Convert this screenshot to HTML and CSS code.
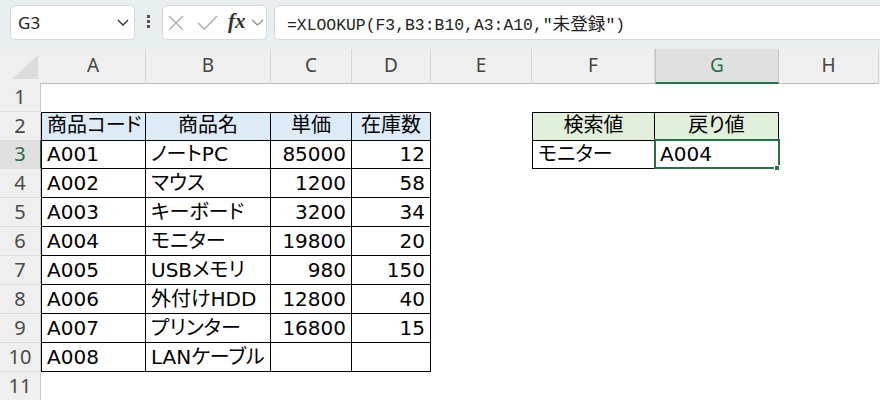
FILE: index.html
```html
<!DOCTYPE html>
<html lang="ja">
<head>
    <meta charset="UTF-8">
    <title>XLOOKUP</title>
    <link rel="stylesheet" href="styles.css">
</head>
<body>

    <!-- formula bar -->
    <div class="fbar">
        <div class="namebox">
            <span>G3</span>
            <svg width="12" height="7" viewBox="0 0 12 7"><polyline points="1,1 6,6 11,1" fill="none" stroke="#333" stroke-width="1.4"/></svg>
        </div>
        <div class="grip"><i></i><i></i><i></i></div>
        <div class="fxbox">
            <svg class="x" width="16" height="16" viewBox="0 0 16 16"><path d="M1 1L15 15M15 1L1 15" stroke="#a8a8a8" stroke-width="1.3"/></svg>
            <svg class="ok" width="21" height="15" viewBox="0 0 21 15"><polyline points="1,8 7.5,14 20,1" fill="none" stroke="#a8a8a8" stroke-width="1.3"/></svg>
            <span class="fx">fx</span>
            <svg class="dd" width="13" height="7" viewBox="0 0 13 7"><polyline points="1,1 6.5,6 12,1" fill="none" stroke="#8c8c8c" stroke-width="1.2"/></svg>
        </div>
        <div class="formula">=XLOOKUP(F3,B3:B10,A3:A10,"<span class="jp">未登録</span>")</div>
    </div>

    <!-- sheet -->
    <div class="sheet">
        <div class="row colhead">
            <div class="corner"><svg width="26" height="24" viewBox="0 0 26 24"><polygon points="26,0 26,24 0,24" fill="#dcdcdc"/></svg></div>
            <div class="ch">A</div>
            <div class="ch">B</div>
            <div class="ch">C</div>
            <div class="ch">D</div>
            <div class="ch">E</div>
            <div class="ch">F</div>
            <div class="ch on">G</div>
            <div class="ch">H</div>
        </div>

        <div class="row">
            <div class="rh">1</div>
            <div class="c"></div><div class="c"></div><div class="c"></div><div class="c"></div>
            <div class="c"></div><div class="c"></div><div class="c"></div><div class="c"></div>
        </div>

        <div class="row r2">
            <div class="rh">2</div>
            <div class="c b bt bl blue mid">商品コード</div>
            <div class="c b bt blue mid">商品名</div>
            <div class="c b bt blue mid">単価</div>
            <div class="c b bt blue mid">在庫数</div>
            <div class="c"></div>
            <div class="c b bt bl green mid">検索値</div>
            <div class="c b bt green mid">戻り値</div>
            <div class="c"></div>
        </div>

        <div class="row">
            <div class="rh on">3</div>
            <div class="c b bl">A001</div>
            <div class="c b">ノートPC</div>
            <div class="c b num">85000</div>
            <div class="c b num">12</div>
            <div class="c"></div>
            <div class="c b bl">モニター</div>
            <div class="c b active">A004<span class="sel"></span><span class="handle"></span></div>
            <div class="c"></div>
        </div>

        <div class="row">
            <div class="rh">4</div>
            <div class="c b bl">A002</div>
            <div class="c b">マウス</div>
            <div class="c b num">1200</div>
            <div class="c b num">58</div>
            <div class="c"></div><div class="c"></div><div class="c"></div><div class="c"></div>
        </div>

        <div class="row">
            <div class="rh">5</div>
            <div class="c b bl">A003</div>
            <div class="c b">キーボード</div>
            <div class="c b num">3200</div>
            <div class="c b num">34</div>
            <div class="c"></div><div class="c"></div><div class="c"></div><div class="c"></div>
        </div>

        <div class="row">
            <div class="rh">6</div>
            <div class="c b bl">A004</div>
            <div class="c b">モニター</div>
            <div class="c b num">19800</div>
            <div class="c b num">20</div>
            <div class="c"></div><div class="c"></div><div class="c"></div><div class="c"></div>
        </div>

        <div class="row">
            <div class="rh">7</div>
            <div class="c b bl">A005</div>
            <div class="c b">USBメモリ</div>
            <div class="c b num">980</div>
            <div class="c b num">150</div>
            <div class="c"></div><div class="c"></div><div class="c"></div><div class="c"></div>
        </div>

        <div class="row">
            <div class="rh">8</div>
            <div class="c b bl">A006</div>
            <div class="c b">外付けHDD</div>
            <div class="c b num">12800</div>
            <div class="c b num">40</div>
            <div class="c"></div><div class="c"></div><div class="c"></div><div class="c"></div>
        </div>

        <div class="row">
            <div class="rh">9</div>
            <div class="c b bl">A007</div>
            <div class="c b">プリンター</div>
            <div class="c b num">16800</div>
            <div class="c b num">15</div>
            <div class="c"></div><div class="c"></div><div class="c"></div><div class="c"></div>
        </div>

        <div class="row">
            <div class="rh">10</div>
            <div class="c b bl">A008</div>
            <div class="c b">LANケーブル</div>
            <div class="c b num"></div>
            <div class="c b num"></div>
            <div class="c"></div><div class="c"></div><div class="c"></div><div class="c"></div>
        </div>

        <div class="row">
            <div class="rh">11</div>
            <div class="c"></div><div class="c"></div><div class="c"></div><div class="c"></div>
            <div class="c"></div><div class="c"></div><div class="c"></div><div class="c"></div>
        </div>
    </div>

</body>
</html>
```

FILE: styles.css
```css
* {
    box-sizing: border-box;
}

body {
    margin: 0;
    width: 880px;
    height: 400px;
    overflow: hidden;
    background: #fff;
    font-family: "Noto Sans", sans-serif;
}

/* formula bar */
.fbar {
    display: flex;
    align-items: flex-start;
    height: 49px;
    padding: 5px 0 0 10px;
    background: #e9eef1;
}

.namebox,
.fxbox,
.formula {
    height: 35px;
    background: #fff;
    border: 1px solid #d3d9dc;
    border-radius: 5px;
}

.namebox {
    width: 125px;
    display: flex;
    align-items: center;
    justify-content: space-between;
    padding: 0 5px 0 7px;
    font-size: 17px;
    color: #222;
}

.grip {
    display: flex;
    flex-direction: column;
    gap: 2px;
    margin: 10px 0 0 12px;
}

.grip i {
    width: 3px;
    height: 3px;
    background: #555;
}

.fxbox {
    width: 105px;
    margin-left: 12px;
    display: flex;
    align-items: center;
    padding-left: 5px;
}

.fxbox .ok {
    margin-left: 13px;
}

.fxbox .fx {
    margin-left: 10px;
    font-family: "Liberation Serif", serif;
    font-style: italic;
    font-weight: bold;
    font-size: 21px;
    color: #333;
    line-height: 1;
    margin-top: -2px;
}

.fxbox .dd {
    margin-left: 5px;
}

.formula {
    flex: 1;
    margin-left: 7px;
    margin-right: -10px;
    padding-left: 12px;
    font-family: "Liberation Mono", "Noto Sans CJK JP", monospace;
    font-size: 16.4px;
    line-height: 33px;
    color: #222;
}

.formula .jp {
    font-family: "Noto Sans CJK JP", sans-serif;
    font-size: 17.6px;
}

/* grid */
.row {
    display: grid;
    grid-template-columns: 41px 105px 125px 81px 79px 101px 123px 124px 100px;
    height: 29px;
}

.row.r2 {
    height: 28px;
}

.colhead {
    height: 34px;
    background: #efefef;
}

.corner {
    display: flex;
    justify-content: flex-end;
    align-items: flex-end;
    padding: 0 3px 4px 0;
    border-bottom: 1px solid #b9b9b9;
}

.ch {
    border-right: 1px solid #d6d6d6;
    border-bottom: 1px solid #b9b9b9;
    text-align: center;
    font-size: 19px;
    line-height: 33px;
    color: #444;
}

.ch.on {
    background: #e0e0e0;
    border-left: 1px solid #c4c4c4;
    border-right: 1px solid #c4c4c4;
    border-bottom: 2px solid #217346;
    color: #1e7145;
}

.rh {
    background: #efefef;
    border-right: 1px solid #c8c8c8;
    border-bottom: 1px solid #dedede;
    text-align: center;
    font-size: 20px;
    line-height: 28px;
    color: #4a4a4a;
}

.rh.on {
    background: #e0e0e0;
    border-right-color: #217346;
    color: #2f6b4a;
}

/* cells */
.c {
    position: relative;
    padding: 0 5px;
    font-family: "DejaVu Sans", "Noto Sans CJK JP", sans-serif;
    font-feature-settings: "palt";
    font-size: 20px;
    line-height: 28px;
    white-space: nowrap;
    color: #000;
}

.b {
    border-right: 1px solid #000;
    border-bottom: 1px solid #000;
}

.bt {
    border-top: 1px solid #000;
}

.bl {
    border-left: 1px solid #000;
}

.r2 .c {
    line-height: 25px;
}

.blue {
    background: #ddebf7;
}

.green {
    background: #e2efda;
}

.mid {
    text-align: center;
}

.num {
    text-align: right;
}

/* active cell */
.active .sel {
    position: absolute;
    left: -1px;
    top: -1px;
    right: -2px;
    bottom: -1px;
    border: 2px solid #217346;
}

.active .handle {
    position: absolute;
    right: -2px;
    bottom: -3px;
    width: 6px;
    height: 6px;
    background: #217346;
    border: 1px solid #fff;
}
```
